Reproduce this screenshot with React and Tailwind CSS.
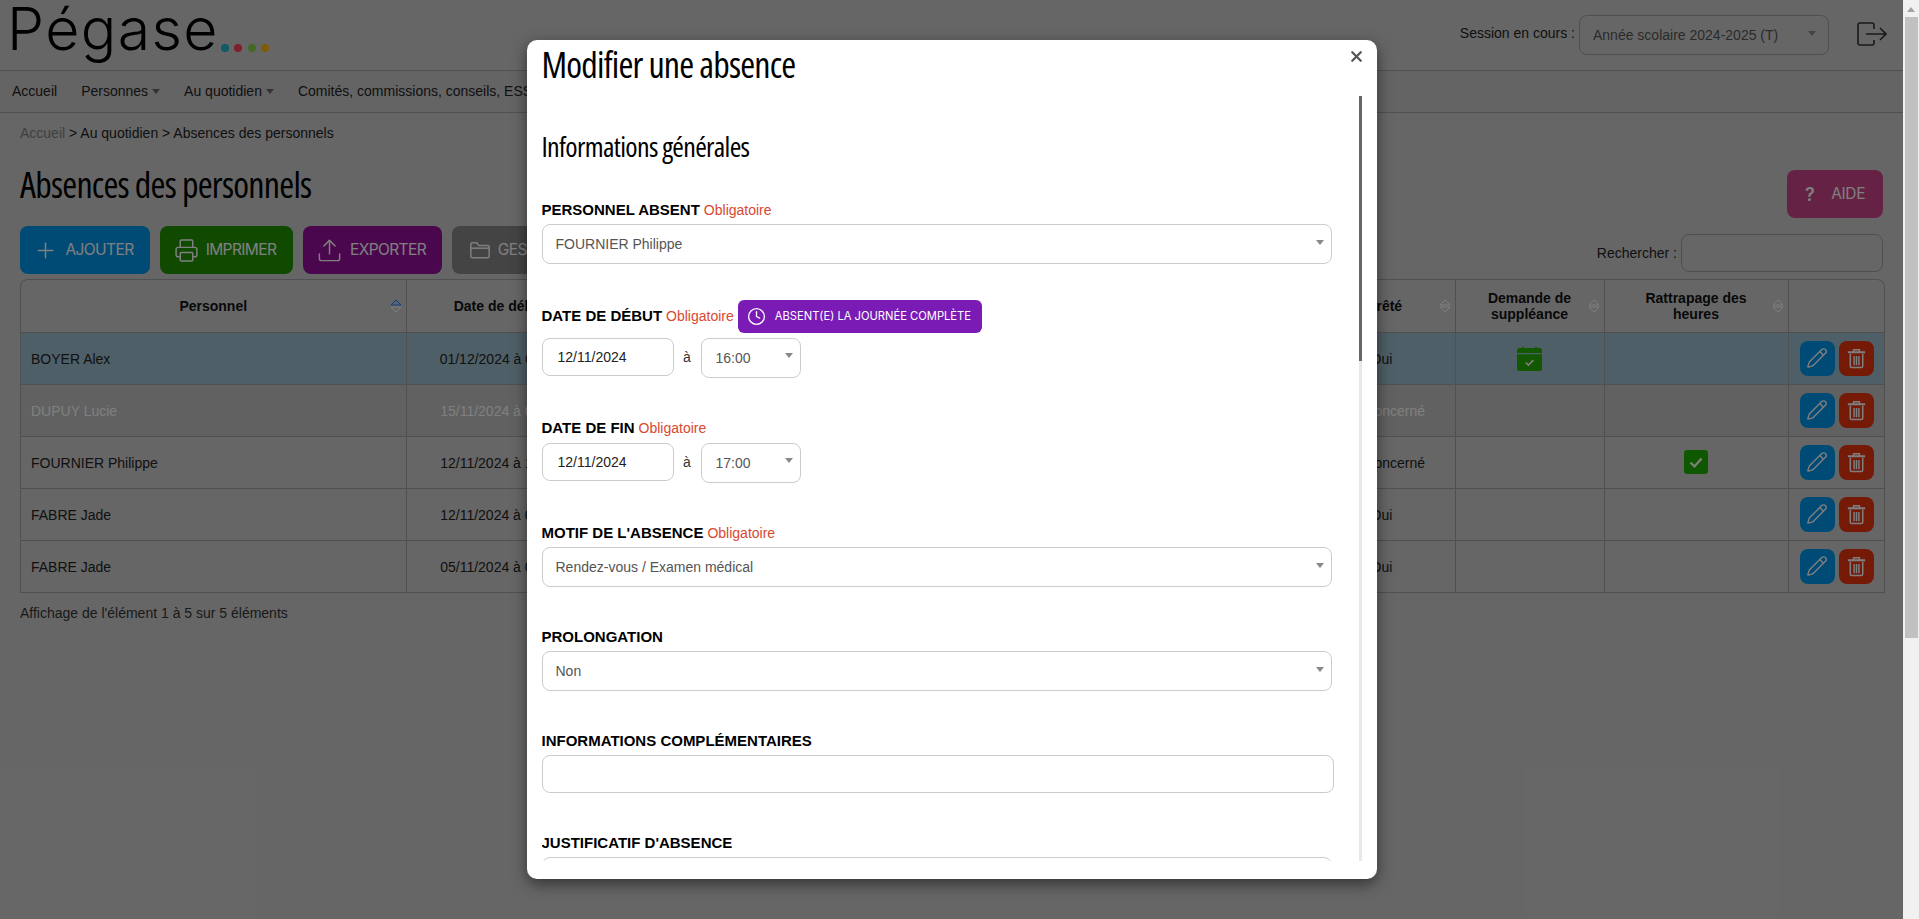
import React from "react";
import { Plus, Printer, Upload, Pencil, X, Clock } from "lucide-react";

const rows = [
  { n: "BOYER Alex", d: "01/12/2024 à 09:00", f: "01/12/2024 à 17:00", m: "Formation", x: "1 jour", a: "Oui", cal: true, sel: true },
  { n: "DUPUY Lucie", d: "15/11/2024 à 08:00", f: "15/11/2024 à 12:00", m: "Garde d'enfant", x: "4 heures", a: "Non concerné", off: true },
  { n: "FOURNIER Philippe", d: "12/11/2024 à 16:00", f: "12/11/2024 à 17:00", m: "Rendez-vous / Examen médical", x: "1 heure", a: "Non concerné", chk: true },
  { n: "FABRE Jade", d: "12/11/2024 à 09:00", f: "12/11/2024 à 17:00", m: "Maladie", x: "1 jour", a: "Oui" },
  { n: "FABRE Jade", d: "05/11/2024 à 09:00", f: "05/11/2024 à 17:00", m: "Maladie", x: "1 jour", a: "Oui" },
];

function Caret({ className = "" }) {
  return <span className={"w-0 h-0 border-x-[4px] border-x-transparent border-t-[5px] border-t-[#888] " + className} />;
}

function Sort({ active }) {
  return (
    <svg width="12" height="14" viewBox="0 0 12 14" className="absolute right-[4px] top-1/2 -translate-y-1/2">
      <path d="M1 6 6 1 11 6Z" fill={active ? "#a8ccff" : "none"} stroke={active ? "#2f7fe0" : "#ffffff"} />
      <path d="M1 8 6 13 11 8Z" fill="none" stroke="#ffffff" />
    </svg>
  );
}

function Th({ children, active, plain }) {
  return (
    <th className="relative border-r border-b border-[#a0a0a0] last:border-r-0 px-[26px] text-[14px] leading-[16px] font-bold text-center text-[#111] align-middle">
      {children}
      {!plain && <Sort active={active} />}
    </th>
  );
}

function Trash() {
  return (
    <svg width="23" height="23" viewBox="0 0 24 24" fill="none" stroke="currentColor" strokeWidth="1.6">
      <path d="M3 5.5h18" strokeWidth="2.2" />
      <path d="M9 5V2.8h6V5" />
      <path d="M5.5 7v13.2c0 .8.6 1.3 1.3 1.3h10.4c.7 0 1.3-.5 1.3-1.3V7" />
      <path d="M9.5 9.5v9.5M12 9.5v9.5M14.5 9.5v9.5" strokeWidth="1.5" />
    </svg>
  );
}

function FolderIcon() {
  return (
    <svg width="22" height="22" viewBox="0 0 24 24" fill="none" stroke="currentColor" strokeWidth="1.6">
      <path d="M2 8V5.5A1.5 1.5 0 0 1 3.5 4h5l2 3h10A1.5 1.5 0 0 1 22 8.5V19a1.5 1.5 0 0 1-1.5 1.5h-17A1.5 1.5 0 0 1 2 19Z" />
      <path d="M2 10h20" />
    </svg>
  );
}

function Actions() {
  return (
    <div className="flex justify-center gap-[4px] pl-[1px]">
      <button className="w-[35px] h-[35px] rounded-[8px] bg-[#0096ea] text-white flex items-center justify-center">
        <Pencil size={22} strokeWidth={1.5} />
      </button>
      <button className="w-[35px] h-[35px] rounded-[8px] bg-[#e8340f] text-white flex items-center justify-center">
        <Trash />
      </button>
    </div>
  );
}

function CalCheck() {
  return (
    <svg width="25" height="25" viewBox="0 0 25 25" className="mx-auto">
      <path d="M5 0.8h1.6V3H5zM18.2 0.8h1.6V3h-1.6z" fill="#22b000" />
      <path d="M2.5 2h20A2.5 2.5 0 0 1 25 4.5V7H0V4.5A2.5 2.5 0 0 1 2.5 2Z" fill="#22b000" />
      <path d="M0 8.2h25V22.5a2.5 2.5 0 0 1-2.5 2.5h-20A2.5 2.5 0 0 1 0 22.5Z" fill="#22b000" />
      <path d="M8.6 16.5l2.8 2.6 5-5" fill="none" stroke="#fff" strokeWidth="1.5" />
    </svg>
  );
}

function ChkSq() {
  return (
    <svg width="24" height="24" viewBox="0 0 24 24" className="mx-auto">
      <rect width="24" height="24" rx="3" fill="#1eb000" />
      <path d="M6.5 12.5l4 4 7-8" fill="none" stroke="#fff" strokeWidth="2.2" />
    </svg>
  );
}

function ToolBtn({ color, w, icon, children }) {
  return (
    <button className={"h-[48px] rounded-[8px] flex items-center justify-center gap-[7px] pr-[3px] text-white font-['Inter'] text-[15.5px] tracking-[-0.6px] " + color + " " + w}>
      {icon}
      <span>{children}</span>
    </button>
  );
}

function Label({ children, req }) {
  return (
    <div className="h-[20px] flex items-center gap-[4px] text-[15px] font-bold text-black leading-[20px]">
      <span>{children}</span>
      {req && <span className="text-[14px] font-normal text-[#d9482f]">Obligatoire</span>}
    </div>
  );
}

function Sel({ children, className = "" }) {
  return (
    <div className={"h-[40px] w-[790px] rounded-[8px] border border-[#ccc] flex items-center justify-between pl-[13px] pr-[7px] text-[14px] text-[#555] " + className}>
      <span className="pt-[1px]">{children}</span>
      <Caret className="-mt-[3px]" />
    </div>
  );
}

function DateRow({ date, time, mt }) {
  return (
    <div className={"flex items-start " + mt}>
      <div className="w-[132px] h-[38px] rounded-[8px] border border-[#ccc] pl-[15px] flex items-center text-[14px] text-[#222]">{date}</div>
      <span className="w-[27px] text-center text-[14px] text-[#333] leading-[38px]">à</span>
      <div className="w-[100px] h-[40px] rounded-[8px] border border-[#ccc] pl-[14px] pr-[7px] flex items-center justify-between text-[14px] text-[#555]">
        <span className="pt-[1px]">{time}</span>
        <Caret className="-mt-[5px]" />
      </div>
    </div>
  );
}

export default function App() {
  const cell = "border-r border-b border-[#a0a0a0] pt-[2px] ";
  return (
    <div className="flex h-[919px] w-[1919px] overflow-hidden font-['Liberation_Sans',Arial,sans-serif] text-[14px] bg-white">
      <div className="relative flex-1 min-w-0 bg-[#cdcdcd]">
        {/* header */}
        <header className="h-[71px] border-b border-[#a0a0a0] flex items-start justify-between pl-[7px] pr-[16px]">
          <div className="flex items-start">
            <span className="font-['Inter',sans-serif] font-light text-[59px] leading-[58px] tracking-[1.4px] text-black">Pégase</span>
            <span className="flex gap-[5.3px] mt-[44px] ml-[2px]">
              <i className="block w-[8px] h-[8px] rounded-full bg-[#1eb4cc]" />
              <i className="block w-[8px] h-[8px] rounded-full bg-[#ff3c5c]" />
              <i className="block w-[8px] h-[8px] rounded-full bg-[#8ad04a]" />
              <i className="block w-[8px] h-[8px] rounded-full bg-[#ffb414]" />
            </span>
          </div>
          <div className="flex items-start pt-[15px]">
            <span className="mr-[4px] mt-[10px] leading-[16px] text-[#222]">Session en cours :</span>
            <div className="w-[250px] h-[40px] rounded-[8px] border border-[#9e9e9e] flex items-center justify-between pl-[13px] pr-[12px] text-[#555]">
              <span>Année scolaire 2024-2025 (T)</span>
              <Caret className="-mt-[3px]" />
            </div>
            <svg width="30" height="24" viewBox="0 0 30 24" className="ml-[28px] mt-[7px]" fill="none" stroke="#333" strokeWidth="1.6">
              <path d="M17 7V3a2 2 0 0 0-2-2H3a2 2 0 0 0-2 2v18a2 2 0 0 0 2 2h12a2 2 0 0 0 2-2v-3" />
              <path d="M9 12h20M23 6l6 6-6 6" />
            </svg>
          </div>
        </header>
        {/* nav */}
        <nav className="h-[42px] border-b border-[#a0a0a0] bg-[#c8c8c8] flex items-center pl-[12px] text-[#222]">
          <span>Accueil</span>
          <span className="ml-[24px]">Personnes</span>
          <Caret className="ml-[4px] !border-t-[#666]" />
          <span className="ml-[24px]">Au quotidien</span>
          <Caret className="ml-[4px] !border-t-[#666]" />
          <span className="ml-[24px]">Comités, commissions, conseils, ESS</span>
        </nav>
        <main className="pl-[20px] pr-[18px]">
          <div className="pt-[12px] h-[32px] leading-[16px] text-[#222]">
            <span className="text-[#808080]">Accueil</span> &gt; Au quotidien &gt; Absences des personnels
          </div>
          <div className="flex justify-between items-start h-[81px] pt-[25px] pr-[2px]">
            <h1 className="font-['Open_Sans',sans-serif] [font-stretch:75%] text-[36px] leading-[48px] tracking-[-0.75px] font-normal text-black -mt-[9px]">Absences des personnels</h1>
            <button className="w-[96px] h-[48px] rounded-[8px] bg-[#cc4488] text-white font-['Inter'] text-[15.5px] tracking-[-0.4px] flex items-center justify-center gap-[17px]">
              <span className="font-semibold text-[18px]">?</span>
              <span>AIDE</span>
            </button>
          </div>
          <div className="flex items-start justify-between h-[53px] pr-[2px]">
            <div className="flex gap-[10px]">
              <ToolBtn color="bg-[#0096ea]" w="w-[130px]" icon={<Plus size={25} strokeWidth={1.4} />}>AJOUTER</ToolBtn>
              <ToolBtn color="bg-[#209400]" w="w-[133px]" icon={<Printer size={25} strokeWidth={1.4} />}>IMPRIMER</ToolBtn>
              <ToolBtn color="bg-[#940e9a]" w="w-[139px]" icon={<Upload size={27} strokeWidth={1.3} />}>EXPORTER</ToolBtn>
              <ToolBtn color="bg-[#888888]" w="w-[130px]" icon={<FolderIcon />}>GESTION</ToolBtn>
            </div>
            <div className="flex items-center mt-[8px]">
              <span className="mr-[4px] text-[#222]">Rechercher :</span>
              <div className="w-[202px] h-[38px] rounded-[8px] border border-[#9e9e9e]" />
            </div>
          </div>
          <div className="border border-[#a0a0a0] border-b-0 rounded-t-[8px] overflow-hidden">
            <table className="table-fixed w-full border-collapse">
              <colgroup>
                <col className="w-[385px]" />
                <col className="w-[188px]" />
                <col className="w-[188px]" />
                <col className="w-[321px]" />
                <col className="w-[205px]" />
                <col className="w-[147px]" />
                <col className="w-[149px]" />
                <col className="w-[184px]" />
                <col className="w-[96px]" />
              </colgroup>
              <thead>
                <tr className="h-[52px]">
                  <Th active>Personnel</Th>
                  <Th>Date de début</Th>
                  <Th>Date de fin</Th>
                  <Th>Motif</Th>
                  <Th>Durée</Th>
                  <Th>Arrêté</Th>
                  <Th>Demande de suppléance</Th>
                  <Th>Rattrapage des heures</Th>
                  <Th plain />
                </tr>
              </thead>
              <tbody>
                {rows.map((r, i) => (
                  <tr key={i} className={"h-[52px] " + (r.sel ? "bg-[#9ebece] " : "") + (r.off ? "bg-[#c2c2c2] text-white " : "text-[#222]")}>
                    <td className={cell + "pl-[10px]"}>{r.n}</td>
                    <td className={cell + "text-center"}>{r.d}</td>
                    <td className={cell + "text-center"}>{r.f}</td>
                    <td className={cell + "text-center"}>{r.m}</td>
                    <td className={cell + "text-center"}>{r.x}</td>
                    <td className={cell + "text-center"}>{r.a}</td>
                    <td className="border-r border-b border-[#a0a0a0]">{r.cal && <CalCheck />}</td>
                    <td className="border-r border-b border-[#a0a0a0]">{r.chk && <ChkSq />}</td>
                    <td className="border-b border-[#a0a0a0]"><Actions /></td>
                  </tr>
                ))}
              </tbody>
            </table>
          </div>
          <div className="mt-[12px] leading-[16px] text-[#333]">Affichage de l'élément 1 à 5 sur 5 éléments</div>
        </main>

        {/* modal overlay */}
        <div className="absolute inset-0 bg-black/50 flex justify-center items-start">
          <div className="relative mt-[40px] w-[850px] h-[839px] bg-white rounded-[10px] shadow-[0_5px_15px_rgba(0,0,0,0.5)] pl-[15px] flex flex-col">
            <button className="absolute right-[12px] top-[8px] text-[#555]">
              <X size={17} strokeWidth={3.2} />
            </button>
            <div className="h-[56px] shrink-0">
              <h2 className="font-['Open_Sans',sans-serif] [font-stretch:75%] text-[36px] leading-[50px] tracking-[-0.8px] font-normal text-black">Modifier une absence</h2>
            </div>
            <div className="relative h-[765px] overflow-hidden">
              <div className="absolute right-[15px] top-0 bottom-0 w-[3px] bg-[#e8e8e8]">
                <div className="w-[3px] h-[265px] bg-[#666]" />
              </div>
              <h3 className="mt-[30px] font-['Open_Sans',sans-serif] [font-stretch:75%] text-[28px] leading-[40px] tracking-[-0.67px] font-normal text-black">Informations générales</h3>
              <div className="mt-[34px]">
                <Label req>PERSONNEL ABSENT</Label>
                <Sel className="mt-[4px]">FOURNIER Philippe</Sel>
              </div>
              <div className="mt-[36px] h-[33px] flex items-center gap-[4px]">
                <div className="pb-[2px]"><Label req>DATE DE DÉBUT</Label></div>
                <span className="h-[33px] rounded-[6px] bg-[#7a1bb5] text-white flex items-center pl-[9px] pr-[11px] gap-[9px] font-['Inter'] text-[11.2px]">
                  <Clock size={19} strokeWidth={1.7} />
                  ABSENT(E) LA JOURNÉE COMPLÈTE
                </span>
              </div>
              <DateRow date="12/11/2024" time="16:00" mt="mt-[5px]" />
              <div className="mt-[40px]"><Label req>DATE DE FIN</Label></div>
              <DateRow date="12/11/2024" time="17:00" mt="mt-[5px]" />
              <div className="mt-[40px]">
                <Label req>MOTIF DE L'ABSENCE</Label>
                <Sel className="mt-[4px]">Rendez-vous / Examen médical</Sel>
              </div>
              <div className="mt-[40px]">
                <Label>PROLONGATION</Label>
                <Sel className="mt-[4px]">Non</Sel>
              </div>
              <div className="mt-[40px]">
                <Label>INFORMATIONS COMPLÉMENTAIRES</Label>
                <div className="mt-[4px] h-[38px] w-[792px] rounded-[8px] border border-[#ccc]" />
              </div>
              <div className="mt-[40px]">
                <Label>JUSTIFICATIF D'ABSENCE</Label>
                <div className="mt-[4px] h-[38px] w-[790px] rounded-[8px] border border-[#ccc]" />
              </div>
            </div>
          </div>
        </div>
      </div>
      {/* window scrollbar */}
      <div className="w-[16px] h-full bg-[#f1f1f1] flex flex-col items-center pt-[7px]">
        <span className="w-0 h-0 border-x-[4px] border-x-transparent border-b-[5px] border-b-[#a3a3a3]" />
        <div className="mt-[5px] w-[13px] h-[621px] bg-[#c1c1c1]" />
      </div>
    </div>
  );
}
